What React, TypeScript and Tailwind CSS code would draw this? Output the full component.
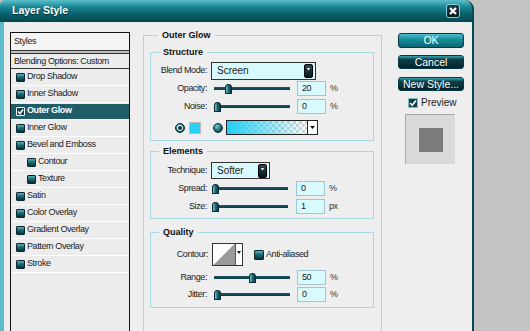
import React from "react";

const listItems: { name: string; indent?: boolean; selected?: boolean }[] = [
  { name: "Drop Shadow" },
  { name: "Inner Shadow" },
  { name: "Outer Glow", selected: true },
  { name: "Inner Glow" },
  { name: "Bevel and Emboss" },
  { name: "Contour", indent: true },
  { name: "Texture", indent: true },
  { name: "Satin" },
  { name: "Color Overlay" },
  { name: "Gradient Overlay" },
  { name: "Pattern Overlay" },
  { name: "Stroke" },
];

function TealBox({ checked, light }: { checked?: boolean; light?: boolean }) {
  return (
    <div
      className={
        "w-[9px] h-[9px] shrink-0 rounded-[1px] border flex items-center justify-center " +
        (light
          ? "border-white bg-[#0f4650]"
          : "border-[#08262c] bg-[linear-gradient(to_bottom,#5fb0bc,#1a6a76_45%,#0a3038)]")
      }
    >
      {checked && (
        <svg width="7" height="7" viewBox="0 0 7 7">
          <path d="M1 3.5 L3 5.5 L6 1.5" stroke="#fff" strokeWidth="1.6" fill="none" />
        </svg>
      )}
    </div>
  );
}

function Slider({ offset }: { offset: string }) {
  return (
    <div className="flex items-center w-[76px] h-[10px] bg-[linear-gradient(#1b5a66,#0e3a44)] bg-no-repeat bg-center bg-[length:100%_3px]">
      <div className={offset + " w-[7px] h-[10px] rounded-t-[4px] rounded-b-[1px] border border-[#062a31] bg-[linear-gradient(to_right,#7cc4ce,#1b6a76_50%,#0a3a44)]"} />
    </div>
  );
}

function NumBox({ value, unit }: { value: string; unit: string }) {
  return (
    <div className="flex items-center">
      <div className="w-[29px] h-[15px] border border-[#9cc7cf] bg-[#d9fafd] pl-[4px] leading-[13px]">
        {value}
      </div>
      <span className="ml-[4px] text-[#333]">{unit}</span>
    </div>
  );
}

function DropButton() {
  return (
    <div className="w-[9px] h-[14px] rounded-[2px] bg-[linear-gradient(to_bottom,#2a4a50,#071a1e)] border border-[#000] flex items-start justify-center pt-[3px]">
      <div className="w-[4px] h-[3px] bg-white [clip-path:polygon(0_0,100%_0,50%_100%)]" />
    </div>
  );
}

function Radio({ selected }: { selected?: boolean }) {
  return (
    <div className="w-[10px] h-[10px] rounded-full border border-[#062a31] bg-[radial-gradient(circle_at_35%_30%,#7cc4ce,#1b6a76_55%,#0a3038)] flex items-center justify-center">
      {selected && (
        <div className="w-[6px] h-[6px] rounded-full border-[1.5px] border-white bg-[#0a3038]" />
      )}
    </div>
  );
}

function Group({ title, className, children }: { title: string; className?: string; children: React.ReactNode }) {
  return (
    <fieldset className={"border border-[#a8d9e2] " + (className ?? "")}>
      <legend className="ml-[8px] px-[4px] font-bold text-[#111] leading-[11px] tracking-normal">{title}</legend>
      {children}
    </fieldset>
  );
}

export default function App() {
  return (
    <div className="flex w-[530px] h-[331px] overflow-hidden bg-[#c3c3c3] font-['Liberation_Sans',Arial,sans-serif] text-[9px] text-[#222] tracking-[-0.4px]">
      {/* dialog window */}
      <div className="w-[474px] h-full flex flex-col shrink-0">
        {/* title bar */}
        <div className="h-[22px] shrink-0 flex items-center justify-between pl-[12px] pr-[12px] rounded-tl-[5px] rounded-tr-[9px] bg-[linear-gradient(to_bottom,#5cc0ca,#1b8a96_30%,#0c6470_60%,#064650)] border-r-[2px] border-[#0a4a54]">
          <span className="text-white font-bold text-[10.5px] tracking-normal [text-shadow:0_1px_1px_#033]">Layer Style</span>
          <div className="w-[14px] h-[14px] rounded-[3px] border border-[#7fd2dc] bg-[linear-gradient(to_bottom,#1f3e44,#061a1e)] flex items-center justify-center">
            <svg width="8" height="8" viewBox="0 0 8 8">
              <path d="M1 1 L7 7 M7 1 L1 7" stroke="#fff" strokeWidth="2.2" />
            </svg>
          </div>
        </div>

        {/* body */}
        <div className="flex-1 flex bg-[#eeeeee] border-l-[4px] border-l-[#5cbcc8] border-r-[2px] border-r-[#0b4650] pl-[6px] pt-[10px]">
          {/* styles list */}
          <div className="w-[120px] shrink-0 border border-[#111] border-b-0 bg-[#ececec] flex flex-col">
            <div className="h-[17px] bg-[#f4f4f4] pl-[3px] leading-[17px]">Styles</div>
            <div className="h-[4px] border-y border-[#333] bg-[#bdbdbd]" />
            <div className="h-[15px] pl-[3px] leading-[15px] border-b border-[#333]">Blending Options: Custom</div>
            {listItems.map((it) => (
              <div key={it.name} className="h-[17px] border-b border-white flex items-center">
                <div
                  className={
                    "flex-1 h-[15px] flex items-center gap-[2px] " +
                    (it.indent ? "pl-[16px] " : "pl-[5px] ") +
                    (it.selected ? "bg-[#1f5d69] text-white font-bold" : "")
                  }
                >
                  <TealBox checked={it.selected} light={it.selected} />
                  <span>{it.name}</span>
                </div>
              </div>
            ))}
          </div>

          {/* settings panel */}
          <Group title="Outer Glow" className="ml-[13px] w-[239px] h-[320px] mt-[-2px] px-[6px] pt-[6px] border-b-0">
            <Group title="Structure" className="w-[224px] pb-[5px]">
              <div className="flex items-center h-[19px] mt-[3px]">
                <span className="w-[56px] text-right">Blend Mode:</span>
                <div className="ml-[4px] w-[105px] h-[18px] border border-[#333] bg-[#d9fafd] flex items-center justify-between pl-[5px] pr-[2px] text-[10px] tracking-normal">
                  <span>Screen</span>
                  <DropButton />
                </div>
              </div>
              <div className="flex items-center h-[15px] mt-[1px]">
                <span className="w-[56px] text-right">Opacity:</span>
                <div className="ml-[7px]"><Slider offset="ml-[11px]" /></div>
                <div className="ml-[7px]"><NumBox value="20" unit="%" /></div>
              </div>
              <div className="flex items-center h-[15px] mt-[3px]">
                <span className="w-[56px] text-right">Noise:</span>
                <div className="ml-[7px]"><Slider offset="ml-0" /></div>
                <div className="ml-[7px]"><NumBox value="0" unit="%" /></div>
              </div>
              <div className="flex items-center h-[15px] mt-[6px] pl-[24px]">
                <Radio selected />
                <div className="ml-[4px] w-[12px] h-[12px] bg-[#27d2f4] border border-[#bbb]" />
                <div className="ml-[12px]"><Radio /></div>
                <div className="ml-[3px] w-[92px] h-[15px] border border-[#222] flex">
                  <div className="flex-1 bg-[linear-gradient(to_right,#22cff3,rgba(34,207,243,0)),repeating-conic-gradient(#ffffff_0_25%,#d4d4d4_0_50%)] bg-[length:100%_100%,6px_6px]" />
                  <div className="w-[10px] border-l border-[#222] bg-white flex items-center justify-center">
                    <div className="w-[5px] h-[3px] bg-[#111] [clip-path:polygon(0_0,100%_0,50%_100%)]" />
                  </div>
                </div>
              </div>
            </Group>

            <Group title="Elements" className="w-[224px] mt-[5px] pb-[4px]">
              <div className="flex items-center h-[17px] mt-[5px]">
                <span className="w-[56px] text-right">Technique:</span>
                <div className="ml-[4px] w-[59px] h-[17px] border border-[#333] bg-[#d9fafd] flex items-center justify-between pl-[5px] pr-[2px] text-[10px] tracking-normal">
                  <span>Softer</span>
                  <DropButton />
                </div>
              </div>
              <div className="flex items-center h-[15px] mt-[2px]">
                <span className="w-[56px] text-right">Spread:</span>
                <div className="ml-[5px]"><Slider offset="ml-0" /></div>
                <div className="ml-[8px]"><NumBox value="0" unit="%" /></div>
              </div>
              <div className="flex items-center h-[15px] mt-[3px]">
                <span className="w-[56px] text-right">Size:</span>
                <div className="ml-[5px]"><Slider offset="ml-0" /></div>
                <div className="ml-[8px]"><NumBox value="1" unit="px" /></div>
              </div>
            </Group>

            <Group title="Quality" className="w-[224px] mt-[8px] pb-[5px]">
              <div className="flex items-center h-[23px] mt-[5px]">
                <span className="w-[57px] text-right">Contour:</span>
                <div className="ml-[4px] w-[31px] h-[23px] border border-[#333] bg-white flex">
                  <div className="flex-1 bg-[linear-gradient(to_top_left,#9a9a9a_50%,#ffffff_50%)]" />
                  <div className="w-[7px] border-l border-[#555] flex items-start justify-center pt-[7px]">
                    <div className="w-[4px] h-[3px] bg-[#111] [clip-path:polygon(0_0,100%_0,50%_100%)]" />
                  </div>
                </div>
                <div className="ml-[11px] flex items-center gap-[2px]">
                  <div className="w-[10px] h-[10px] rounded-[1px] border border-[#08262c] bg-[linear-gradient(to_bottom,#5fb0bc,#1a6a76_45%,#0a3038)]" />
                  <span>Anti-aliased</span>
                </div>
              </div>
              <div className="flex items-center h-[15px] mt-[4px]">
                <span className="w-[56px] text-right">Range:</span>
                <div className="ml-[7px]"><Slider offset="ml-[35px]" /></div>
                <div className="ml-[7px]"><NumBox value="50" unit="%" /></div>
              </div>
              <div className="flex items-center h-[15px] mt-[2px]">
                <span className="w-[56px] text-right">Jitter:</span>
                <div className="ml-[7px]"><Slider offset="ml-0" /></div>
                <div className="ml-[7px]"><NumBox value="0" unit="%" /></div>
              </div>
            </Group>
          </Group>

          {/* buttons */}
          <div className="ml-[16px] w-[66px] flex flex-col items-center">
            <button className="w-[66px] h-[15px] mt-[1px] rounded-[3px] border border-[#053a42] bg-[linear-gradient(to_bottom,#4cc0cc,#17909c_40%,#0a6672)] text-white text-[10.5px] leading-[13px] tracking-normal">
              OK
            </button>
            <button className="w-[66px] h-[14px] mt-[7px] rounded-[3px] border border-[#053a42] bg-[linear-gradient(to_bottom,#3aa6b2,#0d3e48_30%,#03222a)] text-white text-[10.5px] leading-[12px] tracking-normal">
              Cancel
            </button>
            <button className="w-[66px] h-[14px] mt-[8px] rounded-[3px] border border-[#053a42] bg-[linear-gradient(to_bottom,#3aa6b2,#0d3e48_30%,#03222a)] text-white text-[10.5px] leading-[12px] tracking-normal">
              New Style...
            </button>
            <div className="mt-[4px] flex items-center gap-[3px] text-[10px] tracking-normal self-start ml-[10px]">
              <div className="w-[10px] h-[10px] rounded-[1px] border border-[#7fbfc8] bg-[#0f3f4a] flex items-center justify-center">
                <svg width="8" height="8" viewBox="0 0 8 8">
                  <path d="M1 4 L3.2 6.2 L7 1.5" stroke="#fff" strokeWidth="1.6" fill="none" />
                </svg>
              </div>
              <span>Preview</span>
            </div>
            <div className="mt-[4px] self-start ml-[7px] w-[50px] h-[50px] bg-[#dadada] border-l border-t border-[#a8a8a8] flex items-center justify-center">
              <div className="w-[24px] h-[24px] bg-[#7b7b7b]" />
            </div>
          </div>
        </div>
      </div>
      <div className="flex-1" />
    </div>
  );
}
